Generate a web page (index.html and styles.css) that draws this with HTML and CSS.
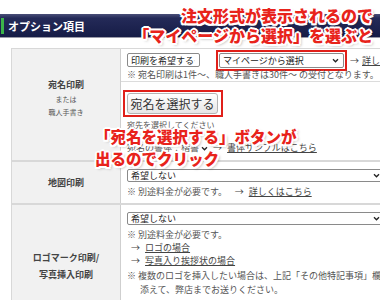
FILE: index.html
```html
<html lang="ja">
<head>
    <meta charset="UTF-8">
    <meta name="viewport" content="width=device-width, initial-scale=1.0">
    <title>オプション項目</title>
    <link rel="stylesheet" href="styles.css">
</head>
<body>
    <div class="page">
        <div class="heading"><span class="headtitle">オプション項目</span></div>

        <div class="options">
            <!-- 宛名印刷 -->
            <div class="row row1">
                <div class="label">
                    <div class="labelmain">宛名印刷</div>
                    <div class="labelsub">または</div>
                    <div class="labelsub">職人手書き</div>
                </div>
                <div class="field">
                    <div class="sub sub1">
                        <div class="line selectline">
                            <span class="select sel1">印刷を希望する<svg class="chev" viewBox="0 0 8 6"><path d="M1 1.5 L4 4.5 L7 1.5" fill="none" stroke="#222" stroke-width="1.6"/></svg></span>
                            <span class="redbox"><span class="select sel2">マイページから選択<svg class="chev" viewBox="0 0 8 6"><path d="M1 1.5 L4 4.5 L7 1.5" fill="none" stroke="#222" stroke-width="1.6"/></svg></span></span>
                            <span class="arrow">→</span> <a class="link">詳しくはこちら</a>
                        </div>
                        <div class="note">※ 宛名印刷は1件～、職人手書きは30件～ の受付となります。</div>
                    </div>
                    <div class="sub sub2">
                        <span class="redbox btnbox"><button class="pickbtn">宛名を選択する</button></span>
                        <div class="note small">宛先を選択してください</div>
                        <div class="note fontline">宛名の書体：楷書 <svg class="chev inline" viewBox="0 0 8 6"><path d="M1 1.5 L4 4.5 L7 1.5" fill="none" stroke="#222" stroke-width="1.6"/></svg> <span class="arrow">→</span> <a class="link">書体サンプルはこちら</a></div>
                    </div>
                </div>
            </div>

            <!-- 地図印刷 -->
            <div class="row row2">
                <div class="label">
                    <div class="labelmain">地図印刷</div>
                </div>
                <div class="field">
                    <div class="select wide">希望しない<svg class="chev" viewBox="0 0 8 6"><path d="M1 1.5 L4 4.5 L7 1.5" fill="none" stroke="#222" stroke-width="1.6"/></svg></div>
                    <div class="note">※ 別途料金が必要です。　<span class="arrow">→</span> <a class="link">詳しくはこちら</a></div>
                </div>
            </div>

            <!-- ロゴマーク印刷 -->
            <div class="row row3">
                <div class="label">
                    <div class="labelmain">ロゴマーク印刷/</div>
                    <div class="labelmain">写真挿入印刷</div>
                </div>
                <div class="field">
                    <div class="select wide">希望しない<svg class="chev" viewBox="0 0 8 6"><path d="M1 1.5 L4 4.5 L7 1.5" fill="none" stroke="#222" stroke-width="1.6"/></svg></div>
                    <div class="note">※ 別途料金が必要です。</div>
                    <div class="note indent"><span class="arrow">→</span> <a class="link">ロゴの場合</a></div>
                    <div class="note indent"><span class="arrow">→</span> <a class="link">写真入り挨拶状の場合</a></div>
                    <div class="note gap">※ 複数のロゴを挿入したい場合は、上記「その他特記事項」欄にその旨を</div>
                    <div class="note indent2">添えて、弊店までお送りください。</div>
                </div>
            </div>
        </div>

        <div class="callout callout1">
            <div>注文形式が表示されるので</div>
            <div>「マイページから選択」を選ぶと</div>
        </div>
        <div class="callout callout2">
            <div>「宛名を選択する」ボタンが</div>
            <div>出るのでクリック</div>
        </div>
    </div>
</body>
</html>
```

FILE: styles.css
```css
body {
    margin: 0;
    background-color: #ffffff;
    font-family: "Noto Sans CJK JP", "Liberation Sans", sans-serif;
    color: #444;
    overflow: hidden;
}
.page {
    position: relative;
    width: 380px;
    height: 300px;
    overflow: hidden;
    padding-top: 14px;
    box-sizing: border-box;
}
.heading {
    height: 23px;
    background: linear-gradient(#4a4f78 0%, #242a58 18%, #161c46 100%);
    border-bottom: 1px solid #9a9aa8;
    padding-left: 1px;
    display: flex;
    align-items: center;
}
.headtitle {
    border-left: 3px solid #3cb44a;
    padding-left: 4px;
    color: #ffffff;
    font-size: 11px;
    font-weight: bold;
    line-height: 16px;
}

/* table */
.options {
    margin: 10px 0 0 11px;
    width: 400px;
    border-top: 1px solid #d8d8d8;
    border-left: 1px solid #d8d8d8;
}
.row {
    display: flex;
    border-bottom: 2px solid #d8d8d8;
}
.label {
    width: 108px;
    flex: none;
    background-color: #f1f1f1;
    border-right: 1px solid #cfcfcf;
    display: flex;
    flex-direction: column;
    align-items: center;
    justify-content: center;
}
.labelmain {
    font-size: 9px;
    font-weight: bold;
    color: #444;
    line-height: 17px;
}
.labelsub {
    font-size: 7px;
    color: #555;
    line-height: 13px;
}
.field {
    flex: 1;
    padding-left: 6px;
    white-space: nowrap;
}
.row1 { height: 111px; }
.row2 { height: 41px; }
.row3 { height: 110px; }
.row1 .label { padding-bottom: 14px; }
.row3 .label { padding-top: 12px; }

.sub1 {
    height: 31px;
    border-bottom: 1px solid #dcdcdc;
    margin-left: -6px;
    padding-left: 6px;
}
.selectline {
    display: flex;
    align-items: center;
    height: 20px;
    margin-top: 1px;
}
.select {
    display: inline-flex;
    align-items: center;
    justify-content: space-between;
    box-sizing: border-box;
    height: 14px;
    border: 1px solid #8a8a8a;
    border-radius: 2px;
    background-color: #ffffff;
    font-size: 9px;
    color: #222;
    padding: 0 4px 0 3px;
}
.chev {
    width: 7px;
    height: 5px;
}
.chev.inline {
    vertical-align: middle;
}
.sel1 {
    width: 73px;
    margin-right: 16px;
}
.redbox {
    display: inline-flex;
    border: 2px solid #e0201a;
    padding: 1px;
}
.sel2 {
    width: 125px;
    height: 15px;
}
.arrow {
    color: #444;
    font-size: 9px;
    margin-left: 3px;
}
.link {
    color: #444;
    font-size: 9px;
    text-decoration: underline;
    margin-left: 3px;
}
.note {
    font-size: 9px;
    line-height: 13px;
    color: #555;
}
.sub1 .note {
    margin-top: -2px;
}
.sub2 {
    padding-top: 8px;
}
.btnbox {
    margin-left: -4px;
    padding: 1px 3px 1px 2px;
}
.pickbtn {
    width: 91px;
    height: 21px;
    border: 1px solid #b4b4b4;
    border-radius: 3px;
    background: linear-gradient(#ffffff, #e6e6e6);
    font-family: "Noto Sans CJK JP", sans-serif;
    font-size: 12px;
    color: #333;
    padding: 0;
}
.small {
    font-size: 8px;
    margin-top: 1px;
}
.fontline {
    margin-top: 10px;
}

.row2 .field,
.row3 .field {
    padding-top: 7px;
}
.wide {
    width: 260px;
    height: 13px;
    padding-right: 6px;
    margin-bottom: 3px;
}
.row3 .wide {
    margin-bottom: 3px;
}
.indent {
    padding-left: 4px;
    line-height: 13px;
}
.indent .arrow {
    margin-left: 0;
}
.gap {
    margin-top: 2px;
    line-height: 14px;
}
.indent2 {
    padding-left: 13px;
    line-height: 14px;
}

/* callouts */
.callout {
    position: absolute;
    color: #e8231b;
    font-size: 15.5px;
    font-weight: 900;
    line-height: 20px;
    white-space: nowrap;
    text-shadow:
        2px 0 0 #fff, -2px 0 0 #fff, 0 2px 0 #fff, 0 -2px 0 #fff,
        1.5px 1.5px 0 #fff, -1.5px 1.5px 0 #fff, 1.5px -1.5px 0 #fff, -1.5px -1.5px 0 #fff,
        2px 2px 3px rgba(0, 0, 0, 0.35);
}
.callout1 {
    top: 5px;
    right: 7px;
    text-align: right;
    font-size: 16px;
}
.callout2 {
    top: 125px;
    left: 95px;
    line-height: 22px;
}
```
